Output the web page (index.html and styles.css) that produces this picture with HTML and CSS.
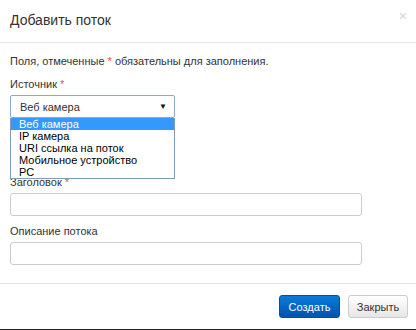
FILE: index.html
```html
<!DOCTYPE html>
<html lang="ru">
<head>
    <meta charset="UTF-8">
    <title>Добавить поток</title>
    <link rel="stylesheet" href="styles.css">
</head>
<body>
    <div class="modal">
        <div class="modal-header">
            <h4 class="modal-title">Добавить поток</h4>
            <span class="close">&times;</span>
        </div>

        <div class="modal-body">
            <p class="hint">Поля, отмеченные <span class="req">*</span> обязательны для заполнения.</p>

            <div class="form-group form-group-source">
                <label>Источник <span class="req">*</span></label>
                <div class="select-wrap">
                    <div class="select">
                        <span>Веб камера</span>
                        <span class="arrow">&#9660;</span>
                    </div>
                    <ul class="options">
                        <li class="active">Веб камера</li>
                        <li>IP камера</li>
                        <li>URI ссылка на поток</li>
                        <li>Мобильное устройство</li>
                        <li>PC</li>
                    </ul>
                </div>
            </div>

            <div class="form-group">
                <label>Заголовок <span class="req">*</span></label>
                <div class="input"></div>
            </div>

            <div class="form-group">
                <label>Описание потока</label>
                <div class="input"></div>
            </div>
        </div>

        <div class="modal-footer">
            <button class="btn btn-primary">Создать</button>
            <button class="btn btn-default">Закрыть</button>
        </div>
    </div>
</body>
</html>
```

FILE: styles.css
```css
body {
    margin: 0;
    background: #fff;
    color: #333;
    font-family: 'Liberation Sans', Arial, sans-serif;
    font-size: 11px;
}

.modal {
    width: 416px;
    height: 329px;
    border-bottom: 1px solid #222;
    display: flex;
    flex-direction: column;
}

.modal-header {
    position: relative;
    height: 43px;
    box-sizing: border-box;
    padding: 0 10px 2px;
    display: flex;
    align-items: center;
    border-bottom: 1px solid #e5e5e5;
}

.modal-title {
    margin: 0;
    font-size: 14px;
    font-weight: normal;
    color: #333;
}

.close {
    position: absolute;
    right: 9px;
    top: 8px;
    font-size: 14px;
    color: #d0d0d0;
}

.modal-body {
    flex: 1;
    padding: 11px 10px 0;
}

.hint {
    margin: 0 0 9px;
    line-height: 14px;
}

.req {
    color: #e05050;
}

.form-group {
    margin-bottom: 8px;
}

.form-group-source {
    margin-bottom: 57px;
}

.form-group label {
    display: block;
    line-height: 14px;
    margin-bottom: 4px;
}

.select-wrap {
    position: relative;
    width: 165px;
}

.select {
    height: 23px;
    box-sizing: border-box;
    border: 1px solid #8fa8c8;
    border-radius: 2px;
    padding: 0 7px 0 9px;
    display: flex;
    align-items: center;
    justify-content: space-between;
    color: #333;
}

.select .arrow {
    font-size: 8px;
    color: #111;
}

.options {
    position: absolute;
    top: 23px;
    left: 0;
    width: 165px;
    box-sizing: border-box;
    margin: 0;
    padding: 0;
    list-style: none;
    background: #fff;
    border: 1px solid #7f9db9;
    border-top: none;
    z-index: 10;
}

.options li {
    height: 12px;
    line-height: 12px;
    padding-left: 8px;
    color: #000;
}

.options li.active {
    background: #3399ff;
    color: #fff;
}

.input {
    width: 352px;
    height: 23px;
    box-sizing: border-box;
    border: 1px solid #ccc;
    border-radius: 3px;
}

.modal-footer {
    height: 46px;
    box-sizing: border-box;
    border-top: 1px solid #e5e5e5;
    display: flex;
    justify-content: flex-end;
    align-items: center;
    gap: 8px;
    padding: 0 8px 0 0;
}

.btn {
    width: 61px;
    height: 23px;
    padding: 0;
    font-family: inherit;
    font-size: 11px;
    border-radius: 3px;
    cursor: pointer;
}

.btn-primary {
    color: #fff;
    background: linear-gradient(#0a7ad8, #0054b0);
    border: 1px solid #0050a0;
}

.btn-default {
    width: 60px;
    color: #333;
    background: linear-gradient(#fff, #e6e6e6);
    border: 1px solid #ccc;
}
```
